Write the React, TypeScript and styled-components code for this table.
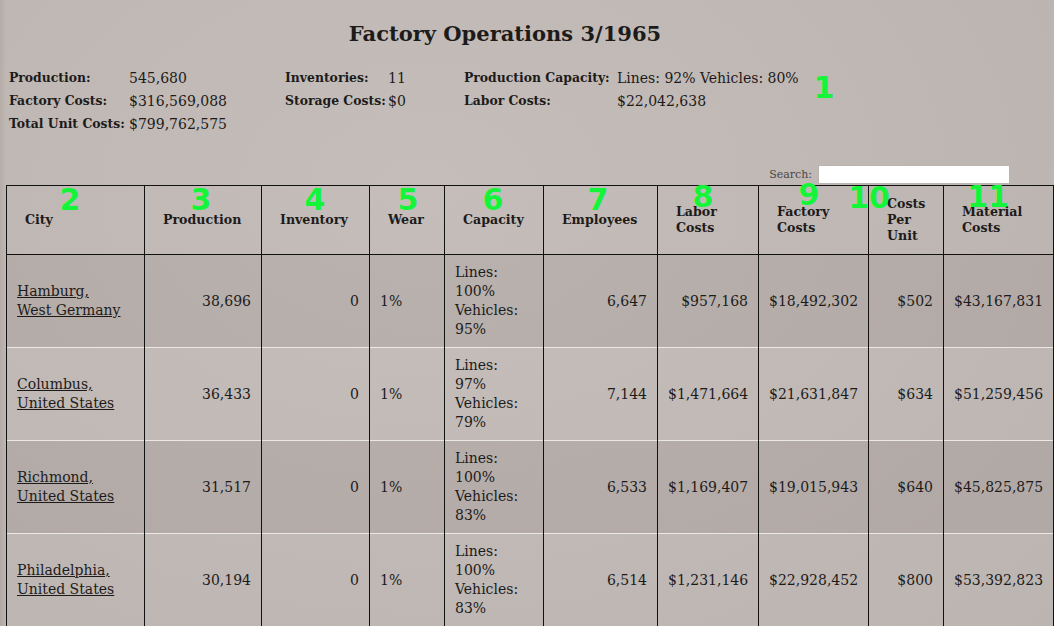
import React from "react";
import styled, { createGlobalStyle } from "styled-components";

const GlobalStyle = createGlobalStyle`
  html, body {
    margin: 0;
    padding: 0;
  }
  body {
    width: 1054px;
    height: 626px;
    overflow: hidden;
    color: #1d1b1a;
    font-family: "DejaVu Serif", "Liberation Serif", serif;
    background-color: #c1b9b5;
    background-image:
      linear-gradient(90deg, rgba(110, 85, 70, 0.12) 0px, rgba(110, 85, 70, 0) 6px),
      radial-gradient(ellipse at 40% 30%, rgba(255, 255, 255, 0.06), rgba(0, 0, 0, 0.04));
  }
`;

const Page = styled.div`
  position: relative;
  padding: 20px 0 0 6px;
`;

const Title = styled.h1`
  margin: 0 50px 0 0;
  font-size: 21px;
  line-height: 28px;
  text-align: center;
`;

const Stats = styled.div`
  display: flex;
  margin: 18px 0 0 3px;
`;

const StatGroup = styled.dl<{ $width: number; $labelWidth: number }>`
  display: grid;
  grid-template-columns: ${(p) => p.$labelWidth}px auto;
  grid-auto-rows: 23px;
  align-items: center;
  align-content: start;
  width: ${(p) => p.$width}px;
  margin: 0;
`;

const Label = styled.dt`
  font-size: 12.4px;
  font-weight: bold;
  white-space: nowrap;
`;

const Value = styled.dd`
  margin: 0;
  font-size: 14px;
  white-space: nowrap;
`;

const SearchRow = styled.div`
  display: flex;
  justify-content: flex-end;
  align-items: center;
  gap: 6px;
  margin: 30px 44px 1px 0;
  font-size: 11px;
  color: #4a4644;
`;

const SearchInput = styled.input`
  width: 192px;
  height: 19px;
  padding: 0;
  border: 1px solid #b9b4b0;
  background: #ffffff;
`;

const Table = styled.table`
  width: 1047px;
  table-layout: fixed;
  border-collapse: collapse;
`;

const Col = styled.col<{ $width: number }>`
  width: ${(p) => p.$width}px;
`;

const HeadCell = styled.th`
  padding: 10px 18px;
  font-size: 12.6px;
  line-height: 16px;
  text-align: left;
  vertical-align: middle;
  border: 1px solid #111;
`;

const Row = styled.tr<{ $odd: boolean }>`
  background: ${(p) => (p.$odd ? "rgba(60, 50, 45, 0.08)" : "rgba(255, 255, 255, 0.04)")};
  border-top: 1px solid #ebe8e6;
`;

const Cell = styled.td<{ $align?: "left" | "right" }>`
  padding: 8px 10px;
  font-size: 14px;
  line-height: 19px;
  text-align: ${(p) => p.$align ?? "left"};
  vertical-align: middle;
  border-left: 1px solid #111;
  border-right: 1px solid #111;
`;

const CityLink = styled.a`
  color: #1d1b1a;
  text-decoration: underline;
`;

const Marker = styled.span<{ $x: number; $y: number }>`
  position: absolute;
  left: ${(p) => p.$x}px;
  top: ${(p) => p.$y}px;
  transform: translate(-50%, -50%);
  font-family: "DejaVu Sans", sans-serif;
  font-weight: bold;
  font-size: 30px;
  line-height: 1;
  color: #14f53a;
  pointer-events: none;
`;

const columns = [
  { title: "City", width: 138 },
  { title: "Production", width: 117 },
  { title: "Inventory", width: 108 },
  { title: "Wear", width: 75 },
  { title: "Capacity", width: 99 },
  { title: "Employees", width: 114 },
  { title: "Labor Costs", width: 101 },
  { title: "Factory Costs", width: 110 },
  { title: "Costs Per Unit", width: 75 },
  { title: "Material Costs", width: 110 },
];

const factories = [
  {
    city: "Hamburg,",
    country: "West Germany",
    production: "38,696",
    inventory: "0",
    wear: "1%",
    capacity: ["Lines:", "100%", "Vehicles:", "95%"],
    employees: "6,647",
    labor: "$957,168",
    factory: "$18,492,302",
    perUnit: "$502",
    material: "$43,167,831",
  },
  {
    city: "Columbus,",
    country: "United States",
    production: "36,433",
    inventory: "0",
    wear: "1%",
    capacity: ["Lines:", "97%", "Vehicles:", "79%"],
    employees: "7,144",
    labor: "$1,471,664",
    factory: "$21,631,847",
    perUnit: "$634",
    material: "$51,259,456",
  },
  {
    city: "Richmond,",
    country: "United States",
    production: "31,517",
    inventory: "0",
    wear: "1%",
    capacity: ["Lines:", "100%", "Vehicles:", "83%"],
    employees: "6,533",
    labor: "$1,169,407",
    factory: "$19,015,943",
    perUnit: "$640",
    material: "$45,825,875",
  },
  {
    city: "Philadelphia,",
    country: "United States",
    production: "30,194",
    inventory: "0",
    wear: "1%",
    capacity: ["Lines:", "100%", "Vehicles:", "83%"],
    employees: "6,514",
    labor: "$1,231,146",
    factory: "$22,928,452",
    perUnit: "$800",
    material: "$53,392,823",
  },
];

const markers = [
  { n: "1", x: 824, y: 88 },
  { n: "2", x: 70, y: 200 },
  { n: "3", x: 201, y: 200 },
  { n: "4", x: 315, y: 200 },
  { n: "5", x: 408, y: 200 },
  { n: "6", x: 493, y: 200 },
  { n: "7", x: 598, y: 200 },
  { n: "8", x: 703, y: 197 },
  { n: "9", x: 809, y: 195 },
  { n: "10", x: 869, y: 198 },
  { n: "11", x: 988, y: 197 },
];

export default function App() {
  return (
    <>
      <GlobalStyle />
      <Page>
        <Title>Factory Operations 3/1965</Title>
        <Stats>
          <StatGroup $width={276} $labelWidth={120}>
            <Label>Production:</Label>
            <Value>545,680</Value>
            <Label>Factory Costs:</Label>
            <Value>$316,569,088</Value>
            <Label>Total Unit Costs:</Label>
            <Value>$799,762,575</Value>
          </StatGroup>
          <StatGroup $width={179} $labelWidth={103}>
            <Label>Inventories:</Label>
            <Value>11</Value>
            <Label>Storage Costs:</Label>
            <Value>$0</Value>
          </StatGroup>
          <StatGroup $width={400} $labelWidth={153}>
            <Label>Production Capacity:</Label>
            <Value>Lines: 92% Vehicles: 80%</Value>
            <Label>Labor Costs:</Label>
            <Value>$22,042,638</Value>
          </StatGroup>
        </Stats>
        <SearchRow>
          <label htmlFor="search">Search:</label>
          <SearchInput id="search" type="search" />
        </SearchRow>
        <Table>
          <colgroup>
            {columns.map((c) => (
              <Col key={c.title} $width={c.width} />
            ))}
          </colgroup>
          <thead>
            <tr>
              {columns.map((c) => (
                <HeadCell key={c.title}>{c.title}</HeadCell>
              ))}
            </tr>
          </thead>
          <tbody>
            {factories.map((f, i) => (
              <Row key={f.city} $odd={i % 2 === 0}>
                <Cell>
                  <CityLink href="#">
                    {f.city}
                    <br />
                    {f.country}
                  </CityLink>
                </Cell>
                <Cell $align="right">{f.production}</Cell>
                <Cell $align="right">{f.inventory}</Cell>
                <Cell>{f.wear}</Cell>
                <Cell>
                  {f.capacity.map((line) => (
                    <div key={line}>{line}</div>
                  ))}
                </Cell>
                <Cell $align="right">{f.employees}</Cell>
                <Cell $align="right">{f.labor}</Cell>
                <Cell $align="right">{f.factory}</Cell>
                <Cell $align="right">{f.perUnit}</Cell>
                <Cell $align="right">{f.material}</Cell>
              </Row>
            ))}
          </tbody>
        </Table>
        {markers.map((m) => (
          <Marker key={m.n} $x={m.x} $y={m.y}>
            {m.n}
          </Marker>
        ))}
      </Page>
    </>
  );
}
